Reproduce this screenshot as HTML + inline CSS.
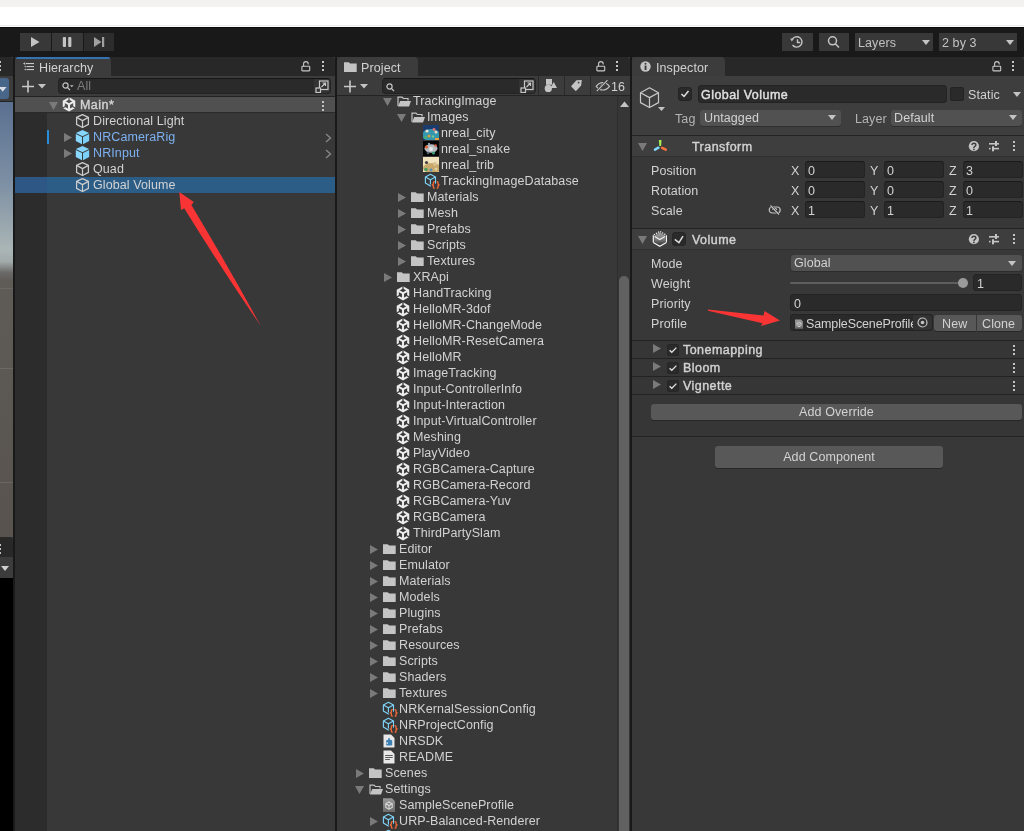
<!DOCTYPE html><html><head><meta charset="utf-8"><style>
*{margin:0;padding:0;box-sizing:border-box}
html,body{width:1024px;height:831px;overflow:hidden}
body{position:relative;background:#383838;font-family:"Liberation Sans", sans-serif;font-size:12.5px;color:#d2d2d2}
.a{position:absolute}
.t{position:absolute;white-space:nowrap;line-height:16px;letter-spacing:0.1px;will-change:transform}
.b{font-weight:bold}
</style></head><body>
<div class="a" style="left:0px;top:0px;width:1024px;height:7px;background:#f3f2f1;"></div>
<div class="a" style="left:0px;top:7px;width:1024px;height:18px;background:#ffffff;"></div>
<div class="a" style="left:0px;top:25px;width:1024px;height:1px;background:#ececec;"></div>
<div class="a" style="left:0px;top:26px;width:1024px;height:1px;background:#fafafa;"></div>
<div class="a" style="left:0px;top:27px;width:1024px;height:1px;background:#0c0c0c;"></div>
<div class="a" style="left:0px;top:28px;width:1024px;height:29px;background:#191919;"></div>
<div class="a" style="left:20px;top:33px;width:31px;height:18px;background:#383838;"></div>
<div class="a" style="left:52px;top:33px;width:31px;height:18px;background:#383838;"></div>
<div class="a" style="left:84px;top:33px;width:30px;height:18px;background:#2d2d2d;"></div>
<svg class="a" style="left:20px;top:33px" width="31" height="18" viewBox="0 0 31 18"><path d="M11 4V14L19.5 9Z" fill="#c4c4c4"/></svg>
<svg class="a" style="left:52px;top:33px" width="31" height="18" viewBox="0 0 31 18"><rect x="10.8" y="4" width="3.2" height="10" rx="1" fill="#c4c4c4"/><rect x="16.2" y="4" width="3.2" height="10" rx="1" fill="#c4c4c4"/></svg>
<svg class="a" style="left:84px;top:33px" width="31" height="18" viewBox="0 0 31 18"><path d="M10 4V14L17.5 9Z" fill="#a0a0a0"/><rect x="18" y="4" width="2.2" height="10" fill="#a0a0a0"/></svg>
<div class="a" style="left:782px;top:33px;width:31px;height:18px;background:#383838;"></div>
<svg class="a" style="left:782px;top:33px" width="31" height="18" viewBox="0 0 31 18"><g fill="none" stroke="#c4c4c4" stroke-width="1.4"><path d="M10.2 6.5A5.2 5.2 0 1 1 10.6 12"/><path d="M15.5 6.2V9.5H18.2"/></g><path d="M8.2 5.5L11.8 5.8L9.8 8.6Z" fill="#c4c4c4"/></svg>
<div class="a" style="left:819px;top:33px;width:30px;height:18px;background:#383838;"></div>
<svg class="a" style="left:819px;top:33px" width="30" height="18" viewBox="0 0 30 18"><g fill="none" stroke="#c4c4c4" stroke-width="1.5"><circle cx="13.5" cy="7.8" r="4"/><path d="M16.3 10.8L20 14.5"/></g></svg>
<div class="a" style="left:855px;top:33px;width:78px;height:18px;background:#383838;"></div>
<div class="t" style="left:858px;top:35px;color:#c2c2c2;">Layers</div>
<svg class="a" style="left:922px;top:40px" width="8" height="6" viewBox="0 0 8 6"><path d="M0 0H8L4 5Z" fill="#c4c4c4"/></svg>
<div class="a" style="left:939px;top:33px;width:78px;height:18px;background:#383838;"></div>
<div class="t" style="left:942px;top:35px;color:#c2c2c2;">2 by 3</div>
<svg class="a" style="left:1006px;top:40px" width="8" height="6" viewBox="0 0 8 6"><path d="M0 0H8L4 5Z" fill="#c4c4c4"/></svg>
<div class="a" style="left:0px;top:57px;width:13px;height:19px;background:#282828;border-radius:0 4px 0 0"></div>
<svg class="a" style="left:-2px;top:60px" width="3" height="11" viewBox="0 0 3 11"><g fill="#c4c4c4"><rect x="1" y="1" width="2" height="2"/><rect x="1" y="5" width="2" height="2"/><rect x="1" y="9" width="2" height="2"/></g></svg>
<div class="a" style="left:0px;top:76px;width:13px;height:26px;background:#3c3c3c;"></div>
<div class="a" style="left:0px;top:78px;width:9px;height:21px;background:#48658a;border-radius:0 3px 3px 0"></div>
<svg class="a" style="left:-1px;top:87px" width="8" height="6" viewBox="0 0 8 6"><path d="M0 0H7.5L3.75 4.8Z" fill="#d8dde4"/></svg>
<div class="a" style="left:0px;top:101px;width:13px;height:1px;background:#222;"></div>
<div class="a" style="left:0px;top:102px;width:13px;height:435px;background:linear-gradient(#5a7090 0%,#7b8ea3 18%,#aab5b5 34%,#a2aaaa 36.7%,#6b6a69 39.2%,#5f5b57 41%,#58534e 100%);"></div>
<div class="a" style="left:0px;top:288px;width:13px;height:1px;background:rgba(255,255,255,0.08);"></div>
<div class="a" style="left:0px;top:368px;width:13px;height:1px;background:rgba(255,255,255,0.1);"></div>
<div class="a" style="left:0px;top:482px;width:13px;height:1px;background:rgba(255,255,255,0.1);"></div>
<div class="a" style="left:0px;top:537px;width:13px;height:20px;background:#282828;border-radius:0 4px 0 0"></div>
<svg class="a" style="left:-2px;top:543px" width="3" height="11" viewBox="0 0 3 11"><g fill="#c4c4c4"><rect x="1" y="1" width="2" height="2"/><rect x="1" y="5" width="2" height="2"/><rect x="1" y="9" width="2" height="2"/></g></svg>
<div class="a" style="left:0px;top:557px;width:13px;height:21px;background:#3c3c3c;"></div>
<svg class="a" style="left:1px;top:566px" width="8" height="6" viewBox="0 0 8 6"><path d="M0 0H8L4 5Z" fill="#d0d0d0"/></svg>
<div class="a" style="left:0px;top:578px;width:13px;height:253px;background:#000000;"></div>
<div class="a" style="left:13px;top:57px;width:2px;height:774px;background:#191919;"></div>
<div class="a" style="left:15px;top:57px;width:320px;height:19px;background:#282828;border-radius:4px 4px 0 0"></div>
<div class="a" style="left:15px;top:57px;width:96px;height:19px;background:#3c3c3c;border-radius:4px 4px 0 0"></div>
<div class="a" style="left:16px;top:57px;width:94px;height:2px;background:#3472b2;border-radius:2px 2px 0 0"></div>
<svg class="a" style="left:23px;top:62px" width="12" height="10" viewBox="0 0 12 10"><g fill="#c8c8c8"><rect x="3" y="1" width="8" height="1.1"/><rect x="3.5" y="4" width="7.5" height="1.1"/><rect x="3.5" y="7" width="7.5" height="1.1"/><path d="M0 1.55L2.2 0.2V2.9Z"/><path d="M1.2 4.55L2.8 3.5V5.6Z"/><path d="M1.2 7.55L2.8 6.5V8.6Z"/></g></svg>
<div class="t" style="left:39px;top:60px;color:#d2d2d2;">Hierarchy</div>
<svg class="a" style="left:301px;top:61px" width="10" height="11" viewBox="0 0 10 11"><g fill="none" stroke="#c8c8c8" stroke-width="1.1"><rect x="0.9" y="5.3" width="7.8" height="4.6" rx="0.6"/><path d="M2.6 5.3V2.9A2.3 2.3 0 0 1 7.2 2.9V3.4"/></g></svg>
<svg class="a" style="left:321px;top:60px" width="3" height="11" viewBox="0 0 3 11"><g fill="#c4c4c4"><rect x="1" y="1" width="2" height="2"/><rect x="1" y="5" width="2" height="2"/><rect x="1" y="9" width="2" height="2"/></g></svg>
<div class="a" style="left:15px;top:76px;width:320px;height:20px;background:#3c3c3c;"></div>
<svg class="a" style="left:22px;top:80px" width="26" height="13" viewBox="0 0 26 13"><path d="M6 0.5V12.5M0 6.5H12" stroke="#c8c8c8" stroke-width="1.6"/><path d="M16 4H24L20 8.5Z" fill="#c4c4c4"/></svg>
<div class="a" style="left:58px;top:78px;width:273px;height:16px;background:#2a2a2a;border-radius:4px;border:1px solid #232323;border-top-color:#161616"></div>
<div class="a" style="left:314px;top:79px;width:16px;height:14px;background:#333333;border-radius:0 3px 3px 0"></div>
<svg class="a" style="left:62px;top:82px" width="12" height="9" viewBox="0 0 12 9"><g fill="none" stroke="#c4c4c4" stroke-width="1.2"><circle cx="3.5" cy="3.5" r="2.6"/><path d="M5.3 5.3L8 8"/></g><path d="M8 3.2H11.5L9.75 5.2Z" fill="#c4c4c4"/></svg>
<div class="t" style="left:77px;top:78px;color:#7d7d7d;">All</div>
<svg class="a" style="left:315px;top:80px" width="14" height="13" viewBox="0 0 14 13"><g fill="none" stroke="#c8c8c8" stroke-width="1.2"><rect x="4.5" y="1" width="8.5" height="8.5"/><rect x="1" y="8" width="4.5" height="4.5" fill="#333"/><path d="M6.5 7L10.5 3M7.5 3H10.5V6"/></g></svg>
<div class="a" style="left:15px;top:96px;width:320px;height:1px;background:#232323;"></div>
<div class="a" style="left:15px;top:97px;width:320px;height:15px;background:#505050;"></div>
<div class="a" style="left:15px;top:112px;width:320px;height:1px;background:#2a2a2a;"></div>
<div class="a" style="left:15px;top:113px;width:32px;height:718px;background:#2c2c2c;"></div>
<svg class="a" style="left:49px;top:102px" width="9" height="8" viewBox="0 0 9 8"><path d="M0 0H9L4.5 8Z" fill="#7a7a7a"/></svg>
<svg class="a" style="left:62px;top:97px" width="14" height="15" viewBox="0 0 14 15"><g fill="none" stroke="#ececec" stroke-width="2.1" stroke-linejoin="miter"><path d="M7 1.4L12.2 4.4V10.4L7 13.3L1.8 10.4V4.4Z"/><path d="M1.8 4.4L7 7.4L12.2 4.4M7 7.4V13.3"/></g><g stroke="#505050" stroke-width="1.2"><path d="M7 -1V3.4"/><path d="M0 11.5L3.4 9.5"/><path d="M14 11.5L10.6 9.5"/></g></svg>
<div class="t" style="left:80px;top:97px;color:#d2d2d2;-webkit-text-stroke:0.4px currentColor;letter-spacing:0.45px">Main*</div>
<svg class="a" style="left:321px;top:100px" width="3" height="11" viewBox="0 0 3 11"><g fill="#c4c4c4"><rect x="1" y="1" width="2" height="2"/><rect x="1" y="5" width="2" height="2"/><rect x="1" y="9" width="2" height="2"/></g></svg>
<div class="a" style="left:15px;top:177px;width:32px;height:16px;background:#2f5785;"></div>
<div class="a" style="left:47px;top:177px;width:288px;height:16px;background:#2c5d87;"></div>
<svg class="a" style="left:75px;top:114px" width="15" height="15" viewBox="0 0 15 15"><g fill="none" stroke="#cdcdcd" stroke-width="1.25" stroke-linejoin="round"><path d="M7.5 0.6L13.4 3.4V10.4L7.5 13.5L1.6 10.4V3.4Z"/><path d="M1.6 3.4L7.5 6.6L13.4 3.4M7.5 6.6V13.5"/></g></svg>
<div class="t" style="left:93px;top:113px;color:#d2d2d2;">Directional Light</div>
<svg class="a" style="left:64px;top:133px" width="8" height="9" viewBox="0 0 8 9"><path d="M0 0L8 4.5L0 9Z" fill="#7a7a7a"/></svg>
<svg class="a" style="left:325px;top:133px" width="7" height="10" viewBox="0 0 7 10"><path d="M1 1L5.5 5L1 9" fill="none" stroke="#8a8a8a" stroke-width="1.3"/></svg>
<svg class="a" style="left:75px;top:130px" width="15" height="15" viewBox="0 0 15 15"><path d="M7.5 0L14.2 3.1L7.5 6.3L0.8 3.1Z" fill="#84d4fb"/><path d="M0.8 4L7 7.1V14.2L0.8 11.1Z" fill="#88d8ff"/><path d="M14.2 4L8 7.1V14.2L14.2 11.1Z" fill="#7ccff7"/></svg>
<div class="t" style="left:93px;top:129px;color:#7cb0f0;">NRCameraRig</div>
<svg class="a" style="left:64px;top:149px" width="8" height="9" viewBox="0 0 8 9"><path d="M0 0L8 4.5L0 9Z" fill="#7a7a7a"/></svg>
<svg class="a" style="left:325px;top:149px" width="7" height="10" viewBox="0 0 7 10"><path d="M1 1L5.5 5L1 9" fill="none" stroke="#8a8a8a" stroke-width="1.3"/></svg>
<svg class="a" style="left:75px;top:146px" width="15" height="15" viewBox="0 0 15 15"><path d="M7.5 0L14.2 3.1L7.5 6.3L0.8 3.1Z" fill="#84d4fb"/><path d="M0.8 4L7 7.1V14.2L0.8 11.1Z" fill="#88d8ff"/><path d="M14.2 4L8 7.1V14.2L14.2 11.1Z" fill="#7ccff7"/></svg>
<div class="t" style="left:93px;top:145px;color:#7cb0f0;">NRInput</div>
<svg class="a" style="left:75px;top:162px" width="15" height="15" viewBox="0 0 15 15"><g fill="none" stroke="#cdcdcd" stroke-width="1.25" stroke-linejoin="round"><path d="M7.5 0.6L13.4 3.4V10.4L7.5 13.5L1.6 10.4V3.4Z"/><path d="M1.6 3.4L7.5 6.6L13.4 3.4M7.5 6.6V13.5"/></g></svg>
<div class="t" style="left:93px;top:161px;color:#d2d2d2;">Quad</div>
<svg class="a" style="left:75px;top:178px" width="15" height="15" viewBox="0 0 15 15"><g fill="none" stroke="#cdcdcd" stroke-width="1.25" stroke-linejoin="round"><path d="M7.5 0.6L13.4 3.4V10.4L7.5 13.5L1.6 10.4V3.4Z"/><path d="M1.6 3.4L7.5 6.6L13.4 3.4M7.5 6.6V13.5"/></g></svg>
<div class="t" style="left:93px;top:177px;color:#d2d2d2;">Global Volume</div>
<div class="a" style="left:47px;top:130px;width:2px;height:14px;background:#2a8bd6;"></div>
<div class="a" style="left:335px;top:57px;width:2px;height:774px;background:#191919;"></div>
<div class="a" style="left:337px;top:57px;width:293px;height:19px;background:#282828;border-radius:4px 4px 0 0"></div>
<div class="a" style="left:337px;top:57px;width:81px;height:19px;background:#3c3c3c;border-radius:4px 4px 0 0"></div>
<svg class="a" style="left:344px;top:62px" width="13" height="11" viewBox="0 0 13 11"><path d="M0 0.2H4.7L6.1 1.6H12.7V10H0Z" fill="#c4c4c4"/></svg>
<div class="t" style="left:361px;top:60px;color:#d2d2d2;">Project</div>
<svg class="a" style="left:596px;top:61px" width="10" height="11" viewBox="0 0 10 11"><g fill="none" stroke="#c8c8c8" stroke-width="1.1"><rect x="0.9" y="5.3" width="7.8" height="4.6" rx="0.6"/><path d="M2.6 5.3V2.9A2.3 2.3 0 0 1 7.2 2.9V3.4"/></g></svg>
<svg class="a" style="left:615px;top:60px" width="3" height="11" viewBox="0 0 3 11"><g fill="#c4c4c4"><rect x="1" y="1" width="2" height="2"/><rect x="1" y="5" width="2" height="2"/><rect x="1" y="9" width="2" height="2"/></g></svg>
<div class="a" style="left:337px;top:76px;width:293px;height:20px;background:#3c3c3c;"></div>
<svg class="a" style="left:344px;top:80px" width="26" height="13" viewBox="0 0 26 13"><path d="M6 0.5V12.5M0 6.5H12" stroke="#c8c8c8" stroke-width="1.6"/><path d="M16 4H24L20 8.5Z" fill="#c4c4c4"/></svg>
<div class="a" style="left:382px;top:78px;width:154px;height:16px;background:#2a2a2a;border-radius:4px;border:1px solid #232323;border-top-color:#161616"></div>
<div class="a" style="left:519px;top:79px;width:16px;height:14px;background:#333333;border-radius:0 3px 3px 0"></div>
<svg class="a" style="left:386px;top:83px" width="9" height="9" viewBox="0 0 9 9"><g fill="none" stroke="#c4c4c4" stroke-width="1.2"><circle cx="3.5" cy="3.5" r="2.6"/><path d="M5.3 5.3L8 8"/></g></svg>
<svg class="a" style="left:520px;top:80px" width="14" height="13" viewBox="0 0 14 13"><g fill="none" stroke="#c8c8c8" stroke-width="1.2"><rect x="4.5" y="1" width="8.5" height="8.5"/><rect x="1" y="8" width="4.5" height="4.5" fill="#333"/><path d="M6.5 7L10.5 3M7.5 3H10.5V6"/></g></svg>
<div class="a" style="left:538px;top:76px;width:1px;height:20px;background:#2a2a2a;"></div>
<div class="a" style="left:564px;top:76px;width:1px;height:20px;background:#2a2a2a;"></div>
<div class="a" style="left:590px;top:76px;width:1px;height:20px;background:#2a2a2a;"></div>
<svg class="a" style="left:544px;top:78px" width="15" height="15" viewBox="0 0 15 15"><rect x="2" y="1" width="6" height="5.8" fill="#c4c4c4"/><path d="M9.7 3.9L13 9.9H6.4Z" fill="#c4c4c4"/><circle cx="4.3" cy="10.4" r="3.6" fill="#c4c4c4"/></svg>
<svg class="a" style="left:570px;top:79px" width="13" height="13" viewBox="0 0 13 13"><path d="M6.5 1.3L11.8 0.9L11.2 6.6L5.8 12.2L1 7.2Z" fill="#c4c4c4"/><circle cx="8.6" cy="3.6" r="0.9" fill="#3c3c3c"/></svg>
<svg class="a" style="left:595px;top:79px" width="16" height="14" viewBox="0 0 16 14"><g fill="none" stroke="#c4c4c4" stroke-width="1.1"><path d="M1.2 7.3C3 5 5.2 3.6 7.8 3.6S12.7 5 14.5 7.3C12.7 9.6 10.5 11 7.8 11S3 9.6 1.2 7.3Z"/><path d="M6.5 9A2.2 2.2 0 0 1 9.8 5.8"/></g><path d="M1.8 12.2L12.5 1.2" stroke="#3c3c3c" stroke-width="2.6"/><path d="M1.8 12.2L12.5 1.2" stroke="#c4c4c4" stroke-width="1.1"/></svg>
<div class="t" style="left:611px;top:79px;color:#d2d2d2;">16</div>
<div class="a" style="left:337px;top:95px;width:293px;height:1px;background:#232323;"></div>
<div class="a" style="left:337px;top:96px;width:280px;height:735px;overflow:hidden">
<svg class="a" style="left:46px;top:2px" width="9" height="8" viewBox="0 0 9 8"><path d="M0 0H9L4.5 8Z" fill="#7a7a7a"/></svg>
<svg class="a" style="left:60px;top:0px" width="14" height="11" viewBox="0 0 14 11"><path d="M1 10V1.2H5L6.3 2.5H11V4.5" fill="none" stroke="#c4c4c4" stroke-width="1.2"/><path d="M1 10.5L3.2 5H14L12 10.5Z" fill="#c4c4c4"/></svg>
<div class="t" style="left:76px;top:-3px;color:#d2d2d2;">TrackingImage</div>
<svg class="a" style="left:60px;top:18px" width="9" height="8" viewBox="0 0 9 8"><path d="M0 0H9L4.5 8Z" fill="#7a7a7a"/></svg>
<svg class="a" style="left:74px;top:16px" width="14" height="11" viewBox="0 0 14 11"><path d="M1 10V1.2H5L6.3 2.5H11V4.5" fill="none" stroke="#c4c4c4" stroke-width="1.2"/><path d="M1 10.5L3.2 5H14L12 10.5Z" fill="#c4c4c4"/></svg>
<div class="t" style="left:90px;top:13px;color:#d2d2d2;">Images</div>
<svg class="a" style="left:86px;top:29px" width="16" height="15" viewBox="0 0 16 15"><rect width="16" height="15" fill="#1d3c6e"/><ellipse cx="8" cy="10" rx="9" ry="6" fill="#3596b0"/><circle cx="4" cy="6" r="1.6" fill="#e8e0d0"/><circle cx="11" cy="4.5" r="1.4" fill="#e07070"/><circle cx="13" cy="7" r="1.5" fill="#f0d8c0"/><circle cx="6" cy="11" r="1.6" fill="#d0a040"/><circle cx="2.5" cy="12.5" r="1.4" fill="#50b070"/><rect x="12" y="13" width="4" height="2" fill="#e8a040"/><circle cx="10" cy="11.5" r="1.2" fill="#80c890"/></svg>
<div class="t" style="left:104px;top:29px;color:#d2d2d2;">nreal_city</div>
<svg class="a" style="left:86px;top:45px" width="16" height="15" viewBox="0 0 16 15"><rect width="16" height="15" fill="#050505"/><ellipse cx="8" cy="7.5" rx="6.5" ry="4.2" fill="#b8bcc0"/><circle cx="3.5" cy="6" r="1.5" fill="#e06030"/><circle cx="12.5" cy="4.5" r="1.3" fill="#d86040"/><circle cx="6" cy="3" r="1.2" fill="#8aa0b0"/><circle cx="10.5" cy="12" r="1.5" fill="#40a080"/><circle cx="5" cy="12" r="1.3" fill="#506070"/><circle cx="8" cy="8" r="2" fill="#e8e8e8"/></svg>
<div class="t" style="left:104px;top:45px;color:#d2d2d2;">nreal_snake</div>
<svg class="a" style="left:86px;top:61px" width="16" height="15" viewBox="0 0 16 15"><rect width="16" height="15" fill="#f1e3bd"/><ellipse cx="9" cy="11" rx="9" ry="5" fill="#c9a86c"/><circle cx="3.5" cy="5.5" r="1.6" fill="#404040"/><circle cx="3" cy="12.5" r="1.8" fill="#4aa060"/><circle cx="8" cy="13" r="1.4" fill="#5890c0"/><circle cx="12" cy="7" r="2" fill="#d8c090"/><circle cx="13" cy="12" r="1.5" fill="#e0d0a0"/></svg>
<div class="t" style="left:104px;top:61px;color:#d2d2d2;">nreal_trib</div>
<svg class="a" style="left:87px;top:77px" width="17" height="16" viewBox="0 0 17 16"><g fill="none" stroke="#7dd3f7" stroke-width="1.15" stroke-linejoin="round"><path d="M6.4 1.3L11.5 4V10L6.4 13L1.4 10V4Z"/><path d="M1.4 4L6.4 6.8L11.5 4M6.4 6.8V13"/></g><path d="M10.8 8.6H10.3Q9.4 8.6 9.4 9.5V11L8.4 11.9L9.4 12.8V14.2Q9.4 15.1 10.3 15.1H10.8M12.6 8.6H13.1Q14 8.6 14 9.5V11L15 11.9L14 12.8V14.2Q14 15.1 13.1 15.1H12.6" fill="none" stroke="#383838" stroke-width="3.2"/><path d="M10.8 8.6H10.3Q9.4 8.6 9.4 9.5V11L8.4 11.9L9.4 12.8V14.2Q9.4 15.1 10.3 15.1H10.8M12.6 8.6H13.1Q14 8.6 14 9.5V11L15 11.9L14 12.8V14.2Q14 15.1 13.1 15.1H12.6" fill="none" stroke="#f26b38" stroke-width="1.3"/></svg>
<div class="t" style="left:104px;top:77px;color:#d2d2d2;">TrackingImageDatabase</div>
<svg class="a" style="left:61px;top:97px" width="8" height="9" viewBox="0 0 8 9"><path d="M0 0L8 4.5L0 9Z" fill="#7a7a7a"/></svg>
<svg class="a" style="left:74px;top:96px" width="13" height="11" viewBox="0 0 13 11"><path d="M0 0.2H4.7L6.1 1.6H12.7V10H0Z" fill="#c4c4c4"/></svg>
<div class="t" style="left:90px;top:93px;color:#d2d2d2;">Materials</div>
<svg class="a" style="left:61px;top:113px" width="8" height="9" viewBox="0 0 8 9"><path d="M0 0L8 4.5L0 9Z" fill="#7a7a7a"/></svg>
<svg class="a" style="left:74px;top:112px" width="13" height="11" viewBox="0 0 13 11"><path d="M0 0.2H4.7L6.1 1.6H12.7V10H0Z" fill="#c4c4c4"/></svg>
<div class="t" style="left:90px;top:109px;color:#d2d2d2;">Mesh</div>
<svg class="a" style="left:61px;top:129px" width="8" height="9" viewBox="0 0 8 9"><path d="M0 0L8 4.5L0 9Z" fill="#7a7a7a"/></svg>
<svg class="a" style="left:74px;top:128px" width="13" height="11" viewBox="0 0 13 11"><path d="M0 0.2H4.7L6.1 1.6H12.7V10H0Z" fill="#c4c4c4"/></svg>
<div class="t" style="left:90px;top:125px;color:#d2d2d2;">Prefabs</div>
<svg class="a" style="left:61px;top:145px" width="8" height="9" viewBox="0 0 8 9"><path d="M0 0L8 4.5L0 9Z" fill="#7a7a7a"/></svg>
<svg class="a" style="left:74px;top:144px" width="13" height="11" viewBox="0 0 13 11"><path d="M0 0.2H4.7L6.1 1.6H12.7V10H0Z" fill="#c4c4c4"/></svg>
<div class="t" style="left:90px;top:141px;color:#d2d2d2;">Scripts</div>
<svg class="a" style="left:61px;top:161px" width="8" height="9" viewBox="0 0 8 9"><path d="M0 0L8 4.5L0 9Z" fill="#7a7a7a"/></svg>
<svg class="a" style="left:74px;top:160px" width="13" height="11" viewBox="0 0 13 11"><path d="M0 0.2H4.7L6.1 1.6H12.7V10H0Z" fill="#c4c4c4"/></svg>
<div class="t" style="left:90px;top:157px;color:#d2d2d2;">Textures</div>
<svg class="a" style="left:47px;top:177px" width="8" height="9" viewBox="0 0 8 9"><path d="M0 0L8 4.5L0 9Z" fill="#7a7a7a"/></svg>
<svg class="a" style="left:60px;top:176px" width="13" height="11" viewBox="0 0 13 11"><path d="M0 0.2H4.7L6.1 1.6H12.7V10H0Z" fill="#c4c4c4"/></svg>
<div class="t" style="left:76px;top:173px;color:#d2d2d2;">XRApi</div>
<svg class="a" style="left:59px;top:190px" width="14" height="15" viewBox="0 0 14 15"><g fill="none" stroke="#ececec" stroke-width="2.1" stroke-linejoin="miter"><path d="M7 1.4L12.2 4.4V10.4L7 13.3L1.8 10.4V4.4Z"/><path d="M1.8 4.4L7 7.4L12.2 4.4M7 7.4V13.3"/></g><g stroke="#383838" stroke-width="1.2"><path d="M7 -1V3.4"/><path d="M0 11.5L3.4 9.5"/><path d="M14 11.5L10.6 9.5"/></g></svg>
<div class="t" style="left:76px;top:189px;color:#d2d2d2;">HandTracking</div>
<svg class="a" style="left:59px;top:206px" width="14" height="15" viewBox="0 0 14 15"><g fill="none" stroke="#ececec" stroke-width="2.1" stroke-linejoin="miter"><path d="M7 1.4L12.2 4.4V10.4L7 13.3L1.8 10.4V4.4Z"/><path d="M1.8 4.4L7 7.4L12.2 4.4M7 7.4V13.3"/></g><g stroke="#383838" stroke-width="1.2"><path d="M7 -1V3.4"/><path d="M0 11.5L3.4 9.5"/><path d="M14 11.5L10.6 9.5"/></g></svg>
<div class="t" style="left:76px;top:205px;color:#d2d2d2;">HelloMR-3dof</div>
<svg class="a" style="left:59px;top:222px" width="14" height="15" viewBox="0 0 14 15"><g fill="none" stroke="#ececec" stroke-width="2.1" stroke-linejoin="miter"><path d="M7 1.4L12.2 4.4V10.4L7 13.3L1.8 10.4V4.4Z"/><path d="M1.8 4.4L7 7.4L12.2 4.4M7 7.4V13.3"/></g><g stroke="#383838" stroke-width="1.2"><path d="M7 -1V3.4"/><path d="M0 11.5L3.4 9.5"/><path d="M14 11.5L10.6 9.5"/></g></svg>
<div class="t" style="left:76px;top:221px;color:#d2d2d2;">HelloMR-ChangeMode</div>
<svg class="a" style="left:59px;top:238px" width="14" height="15" viewBox="0 0 14 15"><g fill="none" stroke="#ececec" stroke-width="2.1" stroke-linejoin="miter"><path d="M7 1.4L12.2 4.4V10.4L7 13.3L1.8 10.4V4.4Z"/><path d="M1.8 4.4L7 7.4L12.2 4.4M7 7.4V13.3"/></g><g stroke="#383838" stroke-width="1.2"><path d="M7 -1V3.4"/><path d="M0 11.5L3.4 9.5"/><path d="M14 11.5L10.6 9.5"/></g></svg>
<div class="t" style="left:76px;top:237px;color:#d2d2d2;">HelloMR-ResetCamera</div>
<svg class="a" style="left:59px;top:254px" width="14" height="15" viewBox="0 0 14 15"><g fill="none" stroke="#ececec" stroke-width="2.1" stroke-linejoin="miter"><path d="M7 1.4L12.2 4.4V10.4L7 13.3L1.8 10.4V4.4Z"/><path d="M1.8 4.4L7 7.4L12.2 4.4M7 7.4V13.3"/></g><g stroke="#383838" stroke-width="1.2"><path d="M7 -1V3.4"/><path d="M0 11.5L3.4 9.5"/><path d="M14 11.5L10.6 9.5"/></g></svg>
<div class="t" style="left:76px;top:253px;color:#d2d2d2;">HelloMR</div>
<svg class="a" style="left:59px;top:270px" width="14" height="15" viewBox="0 0 14 15"><g fill="none" stroke="#ececec" stroke-width="2.1" stroke-linejoin="miter"><path d="M7 1.4L12.2 4.4V10.4L7 13.3L1.8 10.4V4.4Z"/><path d="M1.8 4.4L7 7.4L12.2 4.4M7 7.4V13.3"/></g><g stroke="#383838" stroke-width="1.2"><path d="M7 -1V3.4"/><path d="M0 11.5L3.4 9.5"/><path d="M14 11.5L10.6 9.5"/></g></svg>
<div class="t" style="left:76px;top:269px;color:#d2d2d2;">ImageTracking</div>
<svg class="a" style="left:59px;top:286px" width="14" height="15" viewBox="0 0 14 15"><g fill="none" stroke="#ececec" stroke-width="2.1" stroke-linejoin="miter"><path d="M7 1.4L12.2 4.4V10.4L7 13.3L1.8 10.4V4.4Z"/><path d="M1.8 4.4L7 7.4L12.2 4.4M7 7.4V13.3"/></g><g stroke="#383838" stroke-width="1.2"><path d="M7 -1V3.4"/><path d="M0 11.5L3.4 9.5"/><path d="M14 11.5L10.6 9.5"/></g></svg>
<div class="t" style="left:76px;top:285px;color:#d2d2d2;">Input-ControllerInfo</div>
<svg class="a" style="left:59px;top:302px" width="14" height="15" viewBox="0 0 14 15"><g fill="none" stroke="#ececec" stroke-width="2.1" stroke-linejoin="miter"><path d="M7 1.4L12.2 4.4V10.4L7 13.3L1.8 10.4V4.4Z"/><path d="M1.8 4.4L7 7.4L12.2 4.4M7 7.4V13.3"/></g><g stroke="#383838" stroke-width="1.2"><path d="M7 -1V3.4"/><path d="M0 11.5L3.4 9.5"/><path d="M14 11.5L10.6 9.5"/></g></svg>
<div class="t" style="left:76px;top:301px;color:#d2d2d2;">Input-Interaction</div>
<svg class="a" style="left:59px;top:318px" width="14" height="15" viewBox="0 0 14 15"><g fill="none" stroke="#ececec" stroke-width="2.1" stroke-linejoin="miter"><path d="M7 1.4L12.2 4.4V10.4L7 13.3L1.8 10.4V4.4Z"/><path d="M1.8 4.4L7 7.4L12.2 4.4M7 7.4V13.3"/></g><g stroke="#383838" stroke-width="1.2"><path d="M7 -1V3.4"/><path d="M0 11.5L3.4 9.5"/><path d="M14 11.5L10.6 9.5"/></g></svg>
<div class="t" style="left:76px;top:317px;color:#d2d2d2;">Input-VirtualController</div>
<svg class="a" style="left:59px;top:334px" width="14" height="15" viewBox="0 0 14 15"><g fill="none" stroke="#ececec" stroke-width="2.1" stroke-linejoin="miter"><path d="M7 1.4L12.2 4.4V10.4L7 13.3L1.8 10.4V4.4Z"/><path d="M1.8 4.4L7 7.4L12.2 4.4M7 7.4V13.3"/></g><g stroke="#383838" stroke-width="1.2"><path d="M7 -1V3.4"/><path d="M0 11.5L3.4 9.5"/><path d="M14 11.5L10.6 9.5"/></g></svg>
<div class="t" style="left:76px;top:333px;color:#d2d2d2;">Meshing</div>
<svg class="a" style="left:59px;top:350px" width="14" height="15" viewBox="0 0 14 15"><g fill="none" stroke="#ececec" stroke-width="2.1" stroke-linejoin="miter"><path d="M7 1.4L12.2 4.4V10.4L7 13.3L1.8 10.4V4.4Z"/><path d="M1.8 4.4L7 7.4L12.2 4.4M7 7.4V13.3"/></g><g stroke="#383838" stroke-width="1.2"><path d="M7 -1V3.4"/><path d="M0 11.5L3.4 9.5"/><path d="M14 11.5L10.6 9.5"/></g></svg>
<div class="t" style="left:76px;top:349px;color:#d2d2d2;">PlayVideo</div>
<svg class="a" style="left:59px;top:366px" width="14" height="15" viewBox="0 0 14 15"><g fill="none" stroke="#ececec" stroke-width="2.1" stroke-linejoin="miter"><path d="M7 1.4L12.2 4.4V10.4L7 13.3L1.8 10.4V4.4Z"/><path d="M1.8 4.4L7 7.4L12.2 4.4M7 7.4V13.3"/></g><g stroke="#383838" stroke-width="1.2"><path d="M7 -1V3.4"/><path d="M0 11.5L3.4 9.5"/><path d="M14 11.5L10.6 9.5"/></g></svg>
<div class="t" style="left:76px;top:365px;color:#d2d2d2;">RGBCamera-Capture</div>
<svg class="a" style="left:59px;top:382px" width="14" height="15" viewBox="0 0 14 15"><g fill="none" stroke="#ececec" stroke-width="2.1" stroke-linejoin="miter"><path d="M7 1.4L12.2 4.4V10.4L7 13.3L1.8 10.4V4.4Z"/><path d="M1.8 4.4L7 7.4L12.2 4.4M7 7.4V13.3"/></g><g stroke="#383838" stroke-width="1.2"><path d="M7 -1V3.4"/><path d="M0 11.5L3.4 9.5"/><path d="M14 11.5L10.6 9.5"/></g></svg>
<div class="t" style="left:76px;top:381px;color:#d2d2d2;">RGBCamera-Record</div>
<svg class="a" style="left:59px;top:398px" width="14" height="15" viewBox="0 0 14 15"><g fill="none" stroke="#ececec" stroke-width="2.1" stroke-linejoin="miter"><path d="M7 1.4L12.2 4.4V10.4L7 13.3L1.8 10.4V4.4Z"/><path d="M1.8 4.4L7 7.4L12.2 4.4M7 7.4V13.3"/></g><g stroke="#383838" stroke-width="1.2"><path d="M7 -1V3.4"/><path d="M0 11.5L3.4 9.5"/><path d="M14 11.5L10.6 9.5"/></g></svg>
<div class="t" style="left:76px;top:397px;color:#d2d2d2;">RGBCamera-Yuv</div>
<svg class="a" style="left:59px;top:414px" width="14" height="15" viewBox="0 0 14 15"><g fill="none" stroke="#ececec" stroke-width="2.1" stroke-linejoin="miter"><path d="M7 1.4L12.2 4.4V10.4L7 13.3L1.8 10.4V4.4Z"/><path d="M1.8 4.4L7 7.4L12.2 4.4M7 7.4V13.3"/></g><g stroke="#383838" stroke-width="1.2"><path d="M7 -1V3.4"/><path d="M0 11.5L3.4 9.5"/><path d="M14 11.5L10.6 9.5"/></g></svg>
<div class="t" style="left:76px;top:413px;color:#d2d2d2;">RGBCamera</div>
<svg class="a" style="left:59px;top:430px" width="14" height="15" viewBox="0 0 14 15"><g fill="none" stroke="#ececec" stroke-width="2.1" stroke-linejoin="miter"><path d="M7 1.4L12.2 4.4V10.4L7 13.3L1.8 10.4V4.4Z"/><path d="M1.8 4.4L7 7.4L12.2 4.4M7 7.4V13.3"/></g><g stroke="#383838" stroke-width="1.2"><path d="M7 -1V3.4"/><path d="M0 11.5L3.4 9.5"/><path d="M14 11.5L10.6 9.5"/></g></svg>
<div class="t" style="left:76px;top:429px;color:#d2d2d2;">ThirdPartySlam</div>
<svg class="a" style="left:33px;top:449px" width="8" height="9" viewBox="0 0 8 9"><path d="M0 0L8 4.5L0 9Z" fill="#7a7a7a"/></svg>
<svg class="a" style="left:46px;top:448px" width="13" height="11" viewBox="0 0 13 11"><path d="M0 0.2H4.7L6.1 1.6H12.7V10H0Z" fill="#c4c4c4"/></svg>
<div class="t" style="left:62px;top:445px;color:#d2d2d2;">Editor</div>
<svg class="a" style="left:33px;top:465px" width="8" height="9" viewBox="0 0 8 9"><path d="M0 0L8 4.5L0 9Z" fill="#7a7a7a"/></svg>
<svg class="a" style="left:46px;top:464px" width="13" height="11" viewBox="0 0 13 11"><path d="M0 0.2H4.7L6.1 1.6H12.7V10H0Z" fill="#c4c4c4"/></svg>
<div class="t" style="left:62px;top:461px;color:#d2d2d2;">Emulator</div>
<svg class="a" style="left:33px;top:481px" width="8" height="9" viewBox="0 0 8 9"><path d="M0 0L8 4.5L0 9Z" fill="#7a7a7a"/></svg>
<svg class="a" style="left:46px;top:480px" width="13" height="11" viewBox="0 0 13 11"><path d="M0 0.2H4.7L6.1 1.6H12.7V10H0Z" fill="#c4c4c4"/></svg>
<div class="t" style="left:62px;top:477px;color:#d2d2d2;">Materials</div>
<svg class="a" style="left:33px;top:497px" width="8" height="9" viewBox="0 0 8 9"><path d="M0 0L8 4.5L0 9Z" fill="#7a7a7a"/></svg>
<svg class="a" style="left:46px;top:496px" width="13" height="11" viewBox="0 0 13 11"><path d="M0 0.2H4.7L6.1 1.6H12.7V10H0Z" fill="#c4c4c4"/></svg>
<div class="t" style="left:62px;top:493px;color:#d2d2d2;">Models</div>
<svg class="a" style="left:33px;top:513px" width="8" height="9" viewBox="0 0 8 9"><path d="M0 0L8 4.5L0 9Z" fill="#7a7a7a"/></svg>
<svg class="a" style="left:46px;top:512px" width="13" height="11" viewBox="0 0 13 11"><path d="M0 0.2H4.7L6.1 1.6H12.7V10H0Z" fill="#c4c4c4"/></svg>
<div class="t" style="left:62px;top:509px;color:#d2d2d2;">Plugins</div>
<svg class="a" style="left:33px;top:529px" width="8" height="9" viewBox="0 0 8 9"><path d="M0 0L8 4.5L0 9Z" fill="#7a7a7a"/></svg>
<svg class="a" style="left:46px;top:528px" width="13" height="11" viewBox="0 0 13 11"><path d="M0 0.2H4.7L6.1 1.6H12.7V10H0Z" fill="#c4c4c4"/></svg>
<div class="t" style="left:62px;top:525px;color:#d2d2d2;">Prefabs</div>
<svg class="a" style="left:33px;top:545px" width="8" height="9" viewBox="0 0 8 9"><path d="M0 0L8 4.5L0 9Z" fill="#7a7a7a"/></svg>
<svg class="a" style="left:46px;top:544px" width="13" height="11" viewBox="0 0 13 11"><path d="M0 0.2H4.7L6.1 1.6H12.7V10H0Z" fill="#c4c4c4"/></svg>
<div class="t" style="left:62px;top:541px;color:#d2d2d2;">Resources</div>
<svg class="a" style="left:33px;top:561px" width="8" height="9" viewBox="0 0 8 9"><path d="M0 0L8 4.5L0 9Z" fill="#7a7a7a"/></svg>
<svg class="a" style="left:46px;top:560px" width="13" height="11" viewBox="0 0 13 11"><path d="M0 0.2H4.7L6.1 1.6H12.7V10H0Z" fill="#c4c4c4"/></svg>
<div class="t" style="left:62px;top:557px;color:#d2d2d2;">Scripts</div>
<svg class="a" style="left:33px;top:577px" width="8" height="9" viewBox="0 0 8 9"><path d="M0 0L8 4.5L0 9Z" fill="#7a7a7a"/></svg>
<svg class="a" style="left:46px;top:576px" width="13" height="11" viewBox="0 0 13 11"><path d="M0 0.2H4.7L6.1 1.6H12.7V10H0Z" fill="#c4c4c4"/></svg>
<div class="t" style="left:62px;top:573px;color:#d2d2d2;">Shaders</div>
<svg class="a" style="left:33px;top:593px" width="8" height="9" viewBox="0 0 8 9"><path d="M0 0L8 4.5L0 9Z" fill="#7a7a7a"/></svg>
<svg class="a" style="left:46px;top:592px" width="13" height="11" viewBox="0 0 13 11"><path d="M0 0.2H4.7L6.1 1.6H12.7V10H0Z" fill="#c4c4c4"/></svg>
<div class="t" style="left:62px;top:589px;color:#d2d2d2;">Textures</div>
<svg class="a" style="left:45px;top:605px" width="17" height="16" viewBox="0 0 17 16"><g fill="none" stroke="#7dd3f7" stroke-width="1.15" stroke-linejoin="round"><path d="M6.4 1.3L11.5 4V10L6.4 13L1.4 10V4Z"/><path d="M1.4 4L6.4 6.8L11.5 4M6.4 6.8V13"/></g><path d="M10.8 8.6H10.3Q9.4 8.6 9.4 9.5V11L8.4 11.9L9.4 12.8V14.2Q9.4 15.1 10.3 15.1H10.8M12.6 8.6H13.1Q14 8.6 14 9.5V11L15 11.9L14 12.8V14.2Q14 15.1 13.1 15.1H12.6" fill="none" stroke="#383838" stroke-width="3.2"/><path d="M10.8 8.6H10.3Q9.4 8.6 9.4 9.5V11L8.4 11.9L9.4 12.8V14.2Q9.4 15.1 10.3 15.1H10.8M12.6 8.6H13.1Q14 8.6 14 9.5V11L15 11.9L14 12.8V14.2Q14 15.1 13.1 15.1H12.6" fill="none" stroke="#f26b38" stroke-width="1.3"/></svg>
<div class="t" style="left:62px;top:605px;color:#d2d2d2;">NRKernalSessionConfig</div>
<svg class="a" style="left:45px;top:621px" width="17" height="16" viewBox="0 0 17 16"><g fill="none" stroke="#7dd3f7" stroke-width="1.15" stroke-linejoin="round"><path d="M6.4 1.3L11.5 4V10L6.4 13L1.4 10V4Z"/><path d="M1.4 4L6.4 6.8L11.5 4M6.4 6.8V13"/></g><path d="M10.8 8.6H10.3Q9.4 8.6 9.4 9.5V11L8.4 11.9L9.4 12.8V14.2Q9.4 15.1 10.3 15.1H10.8M12.6 8.6H13.1Q14 8.6 14 9.5V11L15 11.9L14 12.8V14.2Q14 15.1 13.1 15.1H12.6" fill="none" stroke="#383838" stroke-width="3.2"/><path d="M10.8 8.6H10.3Q9.4 8.6 9.4 9.5V11L8.4 11.9L9.4 12.8V14.2Q9.4 15.1 10.3 15.1H10.8M12.6 8.6H13.1Q14 8.6 14 9.5V11L15 11.9L14 12.8V14.2Q14 15.1 13.1 15.1H12.6" fill="none" stroke="#f26b38" stroke-width="1.3"/></svg>
<div class="t" style="left:62px;top:621px;color:#d2d2d2;">NRProjectConfig</div>
<svg class="a" style="left:46px;top:638px" width="12" height="14" viewBox="0 0 12 14"><path d="M0.5 0.5H8L11.5 4V13.5H0.5Z" fill="#e8e8e8"/><rect x="3.2" y="6" width="6" height="5.6" rx="0.8" fill="#3d80b3"/><rect x="5" y="4.3" width="2.2" height="1.6" rx="0.6" fill="#3d80b3"/><rect x="3.6" y="8.3" width="1.2" height="1.6" fill="#eee"/></svg>
<div class="t" style="left:62px;top:637px;color:#d2d2d2;">NRSDK</div>
<svg class="a" style="left:46px;top:654px" width="12" height="14" viewBox="0 0 12 14"><path d="M0.5 0.5H8L11.5 4V13.5H0.5Z" fill="#e8e8e8"/><g stroke="#5a5a5a" stroke-width="1"><path d="M2.2 5.5H9.7M2.2 7.5H9.7M2.2 9.5H6.9"/></g></svg>
<div class="t" style="left:62px;top:653px;color:#d2d2d2;">README</div>
<svg class="a" style="left:19px;top:673px" width="8" height="9" viewBox="0 0 8 9"><path d="M0 0L8 4.5L0 9Z" fill="#7a7a7a"/></svg>
<svg class="a" style="left:32px;top:672px" width="13" height="11" viewBox="0 0 13 11"><path d="M0 0.2H4.7L6.1 1.6H12.7V10H0Z" fill="#c4c4c4"/></svg>
<div class="t" style="left:48px;top:669px;color:#d2d2d2;">Scenes</div>
<svg class="a" style="left:18px;top:690px" width="9" height="8" viewBox="0 0 9 8"><path d="M0 0H9L4.5 8Z" fill="#7a7a7a"/></svg>
<svg class="a" style="left:32px;top:688px" width="14" height="11" viewBox="0 0 14 11"><path d="M1 10V1.2H5L6.3 2.5H11V4.5" fill="none" stroke="#c4c4c4" stroke-width="1.2"/><path d="M1 10.5L3.2 5H14L12 10.5Z" fill="#c4c4c4"/></svg>
<div class="t" style="left:48px;top:685px;color:#d2d2d2;">Settings</div>
<svg class="a" style="left:46px;top:702px" width="12" height="14" viewBox="0 0 12 14"><defs><linearGradient id="vpg" x1="0" y1="0" x2="0" y2="1"><stop offset="0" stop-color="#9a9a9a"/><stop offset="1" stop-color="#6a6a6a"/></linearGradient></defs><path d="M0 0.3H9L12 3.3V14H0Z" fill="url(#vpg)"/><g fill="none" stroke="#d8d8d8" stroke-width="1.1"><path d="M6 4L9.2 5.8V9.4L6 11.2L2.8 9.4V5.8Z"/><path d="M2.8 5.8L6 7.6L9.2 5.8M6 7.6V11.2"/></g></svg>
<div class="t" style="left:62px;top:701px;color:#d2d2d2;">SampleSceneProfile</div>
<svg class="a" style="left:33px;top:721px" width="8" height="9" viewBox="0 0 8 9"><path d="M0 0L8 4.5L0 9Z" fill="#7a7a7a"/></svg>
<svg class="a" style="left:45px;top:717px" width="17" height="16" viewBox="0 0 17 16"><g fill="none" stroke="#7dd3f7" stroke-width="1.15" stroke-linejoin="round"><path d="M6.4 1.3L11.5 4V10L6.4 13L1.4 10V4Z"/><path d="M1.4 4L6.4 6.8L11.5 4M6.4 6.8V13"/></g><path d="M10.8 8.6H10.3Q9.4 8.6 9.4 9.5V11L8.4 11.9L9.4 12.8V14.2Q9.4 15.1 10.3 15.1H10.8M12.6 8.6H13.1Q14 8.6 14 9.5V11L15 11.9L14 12.8V14.2Q14 15.1 13.1 15.1H12.6" fill="none" stroke="#383838" stroke-width="3.2"/><path d="M10.8 8.6H10.3Q9.4 8.6 9.4 9.5V11L8.4 11.9L9.4 12.8V14.2Q9.4 15.1 10.3 15.1H10.8M12.6 8.6H13.1Q14 8.6 14 9.5V11L15 11.9L14 12.8V14.2Q14 15.1 13.1 15.1H12.6" fill="none" stroke="#f26b38" stroke-width="1.3"/></svg>
<div class="t" style="left:62px;top:717px;color:#d2d2d2;">URP-Balanced-Renderer</div>
<svg class="a" style="left:33px;top:737px" width="8" height="9" viewBox="0 0 8 9"><path d="M0 0L8 4.5L0 9Z" fill="#7a7a7a"/></svg>
<svg class="a" style="left:45px;top:733px" width="17" height="16" viewBox="0 0 17 16"><g fill="none" stroke="#7dd3f7" stroke-width="1.15" stroke-linejoin="round"><path d="M6.4 1.3L11.5 4V10L6.4 13L1.4 10V4Z"/><path d="M1.4 4L6.4 6.8L11.5 4M6.4 6.8V13"/></g><path d="M10.8 8.6H10.3Q9.4 8.6 9.4 9.5V11L8.4 11.9L9.4 12.8V14.2Q9.4 15.1 10.3 15.1H10.8M12.6 8.6H13.1Q14 8.6 14 9.5V11L15 11.9L14 12.8V14.2Q14 15.1 13.1 15.1H12.6" fill="none" stroke="#383838" stroke-width="3.2"/><path d="M10.8 8.6H10.3Q9.4 8.6 9.4 9.5V11L8.4 11.9L9.4 12.8V14.2Q9.4 15.1 10.3 15.1H10.8M12.6 8.6H13.1Q14 8.6 14 9.5V11L15 11.9L14 12.8V14.2Q14 15.1 13.1 15.1H12.6" fill="none" stroke="#f26b38" stroke-width="1.3"/></svg>
<div class="t" style="left:62px;top:733px;color:#d2d2d2;">URP-HighFidelity</div>
</div>
<div class="a" style="left:617px;top:96px;width:13px;height:735px;background:#363636;"></div>
<div class="a" style="left:617px;top:96px;width:1px;height:735px;background:#2e2e2e;"></div>
<svg class="a" style="left:620px;top:101px" width="9" height="7" viewBox="0 0 9 7"><path d="M4.5 0.5L9 6H0Z" fill="#c4c4c4"/></svg>
<div class="a" style="left:619px;top:276px;width:10px;height:560px;background:#616161;border-radius:5px"></div>
<div class="a" style="left:630px;top:57px;width:2px;height:774px;background:#191919;"></div>
<div class="a" style="left:632px;top:57px;width:392px;height:19px;background:#282828;border-radius:4px 4px 0 0"></div>
<div class="a" style="left:632px;top:57px;width:93px;height:19px;background:#3c3c3c;border-radius:4px 4px 0 0"></div>
<svg class="a" style="left:640px;top:61px" width="11" height="11" viewBox="0 0 11 11"><circle cx="5.5" cy="5.5" r="5.2" fill="#c4c4c4"/><rect x="4.6" y="4.5" width="1.9" height="4.5" fill="#3c3c3c"/><circle cx="5.5" cy="2.8" r="1" fill="#3c3c3c"/></svg>
<div class="t" style="left:656px;top:60px;color:#d2d2d2;">Inspector</div>
<svg class="a" style="left:992px;top:61px" width="10" height="11" viewBox="0 0 10 11"><g fill="none" stroke="#c8c8c8" stroke-width="1.1"><rect x="0.9" y="5.3" width="7.8" height="4.6" rx="0.6"/><path d="M2.6 5.3V2.9A2.3 2.3 0 0 1 7.2 2.9V3.4"/></g></svg>
<svg class="a" style="left:1011px;top:60px" width="3" height="11" viewBox="0 0 3 11"><g fill="#c4c4c4"><rect x="1" y="1" width="2" height="2"/><rect x="1" y="5" width="2" height="2"/><rect x="1" y="9" width="2" height="2"/></g></svg>
<div class="a" style="left:632px;top:76px;width:392px;height:59px;background:#3e3e3e;"></div>
<svg class="a" style="left:639px;top:86px" width="21" height="23" viewBox="0 0 14 15"><g fill="none" stroke="#c8c8c8" stroke-width="0.8" stroke-linejoin="round"><path d="M7 1L13 4.3V10.9L7 14.2L1 10.9V4.3Z"/><path d="M1 4.3L7 7.6L13 4.3M7 7.6V14.2"/></g></svg>
<svg class="a" style="left:658px;top:107px" width="7" height="5" viewBox="0 0 7 5"><path d="M0 0H7L3.5 4Z" fill="#c4c4c4"/></svg>
<div class="a" style="left:678px;top:87px;width:14px;height:14px;background:#2a2a2a;border-radius:3px;border:1px solid #232323"></div>
<svg class="a" style="left:680px;top:89px" width="10" height="10" viewBox="0 0 10 10"><path d="M1.5 5L4 7.5L8.5 2" fill="none" stroke="#e0e0e0" stroke-width="1.5"/></svg>
<div class="a" style="left:698px;top:85px;width:249px;height:18px;background:#2a2a2a;border-radius:3px;border:1px solid #232323"></div>
<div class="t" style="left:701px;top:87px;color:#e0e0e0;-webkit-text-stroke:0.4px currentColor;letter-spacing:0.45px">Global Volume</div>
<div class="a" style="left:950px;top:87px;width:14px;height:14px;background:#2a2a2a;border-radius:2px;border:1px solid #232323"></div>
<div class="t" style="left:968px;top:87px;color:#d2d2d2;">Static</div>
<svg class="a" style="left:1013px;top:92px" width="8" height="6" viewBox="0 0 8 6"><path d="M0 0H8L4 5Z" fill="#c4c4c4"/></svg>
<div class="t" style="left:675px;top:111px;color:#b4b4b4;">Tag</div>
<div class="a" style="left:700px;top:110px;width:141px;height:16px;background:#515151;border-radius:3px;box-shadow:0 1px 0 #303030"></div>
<div class="t" style="left:704px;top:110px;color:#d2d2d2;">Untagged</div>
<svg class="a" style="left:828px;top:115px" width="8" height="6" viewBox="0 0 8 6"><path d="M0 0H8L4 5Z" fill="#c4c4c4"/></svg>
<div class="t" style="left:855px;top:111px;color:#b4b4b4;">Layer</div>
<div class="a" style="left:891px;top:110px;width:131px;height:16px;background:#515151;border-radius:3px;box-shadow:0 1px 0 #303030"></div>
<div class="t" style="left:894px;top:110px;color:#d2d2d2;">Default</div>
<svg class="a" style="left:1009px;top:115px" width="8" height="6" viewBox="0 0 8 6"><path d="M0 0H8L4 5Z" fill="#c4c4c4"/></svg>
<div class="a" style="left:632px;top:135px;width:392px;height:1px;background:#232323;"></div>
<div class="a" style="left:632px;top:136px;width:392px;height:20px;background:#3e3e3e;"></div>
<svg class="a" style="left:638px;top:143px" width="9" height="8" viewBox="0 0 9 8"><path d="M0 0H9L4.5 8Z" fill="#7a7a7a"/></svg>
<svg class="a" style="left:653px;top:139px" width="15" height="14" viewBox="0 0 15 14"><path d="M5.9 1H8.5L8.1 7.1H6.3Z" fill="#a6ee52"/><path d="M2 10.7L5.4 8.7" stroke="#82d6fc" stroke-width="2.5" stroke-linecap="round"/><path d="M9.1 8.8L12.8 10.7" stroke="#fb723c" stroke-width="2.5" stroke-linecap="round"/></svg>
<div class="t" style="left:692px;top:139px;color:#d2d2d2;-webkit-text-stroke:0.4px currentColor;letter-spacing:0.45px">Transform</div>
<svg class="a" style="left:968px;top:141px" width="12" height="11" viewBox="0 0 12 11"><circle cx="5.9" cy="5.15" r="5.1" fill="#c4c4c4"/><path d="M4 4.1Q4 2.3 5.9 2.3Q7.8 2.3 7.8 3.9Q7.8 4.9 6.8 5.4Q5.9 5.9 5.9 6.9" fill="none" stroke="#3e3e3e" stroke-width="1.5"/><rect x="5.1" y="7.7" width="1.6" height="1.5" fill="#3e3e3e"/></svg>
<svg class="a" style="left:988px;top:140px" width="12" height="12" viewBox="0 0 12 12"><g fill="#c4c4c4"><rect x="1" y="3" width="6" height="1.6"/><rect x="7" y="1" width="2" height="5"/><rect x="9" y="3" width="2" height="1.6"/><rect x="1" y="7.8" width="1.6" height="1.6"/><rect x="4" y="6.3" width="2" height="5"/><rect x="6" y="7.8" width="5" height="1.6"/></g></svg>
<svg class="a" style="left:1012px;top:140px" width="3" height="11" viewBox="0 0 3 11"><g fill="#c4c4c4"><rect x="1" y="1" width="2" height="2"/><rect x="1" y="5" width="2" height="2"/><rect x="1" y="9" width="2" height="2"/></g></svg>
<div class="a" style="left:632px;top:156px;width:392px;height:1px;background:#303030;"></div>
<div class="t" style="left:651px;top:163px;color:#d2d2d2;">Position</div>
<div class="t" style="left:791px;top:163px;color:#d2d2d2;">X</div>
<div class="a" style="left:805px;top:161px;width:60px;height:17px;background:#2a2a2a;border-radius:3px;border:1px solid #232323;border-top-color:#1a1a1a"></div>
<div class="t" style="left:808px;top:163px;color:#d2d2d2;">0</div>
<div class="t" style="left:870px;top:163px;color:#d2d2d2;">Y</div>
<div class="a" style="left:884px;top:161px;width:60px;height:17px;background:#2a2a2a;border-radius:3px;border:1px solid #232323;border-top-color:#1a1a1a"></div>
<div class="t" style="left:887px;top:163px;color:#d2d2d2;">0</div>
<div class="t" style="left:949px;top:163px;color:#d2d2d2;">Z</div>
<div class="a" style="left:963px;top:161px;width:60px;height:17px;background:#2a2a2a;border-radius:3px;border:1px solid #232323;border-top-color:#1a1a1a"></div>
<div class="t" style="left:966px;top:163px;color:#d2d2d2;">3</div>
<div class="t" style="left:651px;top:183px;color:#d2d2d2;">Rotation</div>
<div class="t" style="left:791px;top:183px;color:#d2d2d2;">X</div>
<div class="a" style="left:805px;top:181px;width:60px;height:17px;background:#2a2a2a;border-radius:3px;border:1px solid #232323;border-top-color:#1a1a1a"></div>
<div class="t" style="left:808px;top:183px;color:#d2d2d2;">0</div>
<div class="t" style="left:870px;top:183px;color:#d2d2d2;">Y</div>
<div class="a" style="left:884px;top:181px;width:60px;height:17px;background:#2a2a2a;border-radius:3px;border:1px solid #232323;border-top-color:#1a1a1a"></div>
<div class="t" style="left:887px;top:183px;color:#d2d2d2;">0</div>
<div class="t" style="left:949px;top:183px;color:#d2d2d2;">Z</div>
<div class="a" style="left:963px;top:181px;width:60px;height:17px;background:#2a2a2a;border-radius:3px;border:1px solid #232323;border-top-color:#1a1a1a"></div>
<div class="t" style="left:966px;top:183px;color:#d2d2d2;">0</div>
<div class="t" style="left:651px;top:203px;color:#d2d2d2;">Scale</div>
<div class="t" style="left:791px;top:203px;color:#d2d2d2;">X</div>
<div class="a" style="left:805px;top:201px;width:60px;height:17px;background:#2a2a2a;border-radius:3px;border:1px solid #232323;border-top-color:#1a1a1a"></div>
<div class="t" style="left:808px;top:203px;color:#d2d2d2;">1</div>
<div class="t" style="left:870px;top:203px;color:#d2d2d2;">Y</div>
<div class="a" style="left:884px;top:201px;width:60px;height:17px;background:#2a2a2a;border-radius:3px;border:1px solid #232323;border-top-color:#1a1a1a"></div>
<div class="t" style="left:887px;top:203px;color:#d2d2d2;">1</div>
<div class="t" style="left:949px;top:203px;color:#d2d2d2;">Z</div>
<div class="a" style="left:963px;top:201px;width:60px;height:17px;background:#2a2a2a;border-radius:3px;border:1px solid #232323;border-top-color:#1a1a1a"></div>
<div class="t" style="left:966px;top:203px;color:#d2d2d2;">1</div>
<svg class="a" style="left:768px;top:204px" width="14" height="12" viewBox="0 0 14 12"><g fill="none" stroke="#c4c4c4" stroke-width="1.1"><rect x="1.2" y="3" width="11" height="6" rx="3"/><path d="M4.5 6A2.2 2.2 0 0 1 8.8 6"/></g><path d="M2.5 1.5L11 10.5" stroke="#383838" stroke-width="2.4"/><path d="M2.5 1.5L11 10.5" stroke="#c4c4c4" stroke-width="1.1"/></svg>
<div class="a" style="left:632px;top:228px;width:392px;height:1px;background:#232323;"></div>
<div class="a" style="left:632px;top:229px;width:392px;height:20px;background:#3e3e3e;"></div>
<svg class="a" style="left:638px;top:236px" width="9" height="8" viewBox="0 0 9 8"><path d="M0 0H9L4.5 8Z" fill="#7a7a7a"/></svg>
<svg class="a" style="left:652px;top:230px" width="16" height="18" viewBox="0 0 16 18"><defs><linearGradient id="vg" x1="0" y1="0" x2="0" y2="1"><stop offset="0" stop-color="#a0a0a0"/><stop offset="0.55" stop-color="#7a7a7a"/><stop offset="1" stop-color="#3a3a3a"/></linearGradient></defs><path d="M7.8 2.6L13.3 5.6V12L7.8 15L2.4 12V5.6Z" fill="url(#vg)"/><path d="M2.6 6.6L7.8 9.6L13 6.6" fill="none" stroke="#f0f0f0" stroke-width="1.1"/><path d="M1.3 12.3V5.2M14.4 12.3V5.2M1.3 12.5L7.8 16.2L14.4 12.5" fill="none" stroke="#f4f4f4" stroke-width="1.2"/><path d="M1.8 4.8L7.8 1.4L13.9 4.8" fill="none" stroke="#f4f4f4" stroke-width="1.2" stroke-dasharray="1.3 1.1"/></svg>
<div class="a" style="left:672px;top:232px;width:14px;height:14px;background:#2a2a2a;border-radius:3px;border:1px solid #262626"></div>
<svg class="a" style="left:672px;top:232px" width="14" height="14" viewBox="0 0 14 14"><path d="M2.8 7.4L6.9 10.6L11 4.1" fill="none" stroke="#e0e0e0" stroke-width="1.4"/></svg>
<div class="t" style="left:692px;top:232px;color:#d2d2d2;-webkit-text-stroke:0.4px currentColor;letter-spacing:0.45px">Volume</div>
<svg class="a" style="left:968px;top:234px" width="12" height="11" viewBox="0 0 12 11"><circle cx="5.9" cy="5.15" r="5.1" fill="#c4c4c4"/><path d="M4 4.1Q4 2.3 5.9 2.3Q7.8 2.3 7.8 3.9Q7.8 4.9 6.8 5.4Q5.9 5.9 5.9 6.9" fill="none" stroke="#3e3e3e" stroke-width="1.5"/><rect x="5.1" y="7.7" width="1.6" height="1.5" fill="#3e3e3e"/></svg>
<svg class="a" style="left:988px;top:233px" width="12" height="12" viewBox="0 0 12 12"><g fill="#c4c4c4"><rect x="1" y="3" width="6" height="1.6"/><rect x="7" y="1" width="2" height="5"/><rect x="9" y="3" width="2" height="1.6"/><rect x="1" y="7.8" width="1.6" height="1.6"/><rect x="4" y="6.3" width="2" height="5"/><rect x="6" y="7.8" width="5" height="1.6"/></g></svg>
<svg class="a" style="left:1012px;top:233px" width="3" height="11" viewBox="0 0 3 11"><g fill="#c4c4c4"><rect x="1" y="1" width="2" height="2"/><rect x="1" y="5" width="2" height="2"/><rect x="1" y="9" width="2" height="2"/></g></svg>
<div class="a" style="left:632px;top:249px;width:392px;height:1px;background:#303030;"></div>
<div class="t" style="left:651px;top:256px;color:#d2d2d2;">Mode</div>
<div class="t" style="left:651px;top:276px;color:#d2d2d2;">Weight</div>
<div class="t" style="left:651px;top:296px;color:#d2d2d2;">Priority</div>
<div class="t" style="left:651px;top:316px;color:#d2d2d2;">Profile</div>
<div class="a" style="left:791px;top:255px;width:231px;height:16px;background:#515151;border-radius:3px;box-shadow:0 1px 0 #2c2c2c"></div>
<div class="t" style="left:794px;top:255px;color:#d2d2d2;">Global</div>
<svg class="a" style="left:1008px;top:261px" width="8" height="6" viewBox="0 0 8 6"><path d="M0 0H8L4 5Z" fill="#c4c4c4"/></svg>
<div class="a" style="left:790px;top:282px;width:173px;height:2px;background:#5e5e5e;border-radius:1px"></div>
<div class="a" style="left:958px;top:278px;width:10px;height:10px;border-radius:5px;background:#9a9a9a"></div>
<div class="a" style="left:973px;top:274px;width:49px;height:17px;background:#2a2a2a;border-radius:3px;border:1px solid #232323"></div>
<div class="t" style="left:977px;top:276px;color:#d2d2d2;">1</div>
<div class="a" style="left:790px;top:294px;width:232px;height:17px;background:#2a2a2a;border-radius:3px;border:1px solid #232323"></div>
<div class="t" style="left:794px;top:296px;color:#d2d2d2;">0</div>
<div class="a" style="left:790px;top:314px;width:143px;height:17px;background:#2a2a2a;border-radius:3px;border:1px solid #232323"></div>
<div class="a" style="left:913px;top:315px;width:19px;height:15px;background:#323232;border-radius:0 3px 3px 0"></div>
<svg class="a" style="left:917px;top:317px" width="11" height="11" viewBox="0 0 11 11"><circle cx="5.5" cy="5.5" r="4.5" fill="none" stroke="#c4c4c4" stroke-width="1.2"/><circle cx="5.5" cy="5.5" r="1.8" fill="#c4c4c4"/></svg>
<svg class="a" style="left:795px;top:319px" width="8" height="10" viewBox="0 0 12 14"><defs><linearGradient id="vpg" x1="0" y1="0" x2="0" y2="1"><stop offset="0" stop-color="#9a9a9a"/><stop offset="1" stop-color="#6a6a6a"/></linearGradient></defs><path d="M0 0.3H9L12 3.3V14H0Z" fill="url(#vpg)"/><g fill="none" stroke="#d8d8d8" stroke-width="1.1"><path d="M6 4L9.2 5.8V9.4L6 11.2L2.8 9.4V5.8Z"/><path d="M2.8 5.8L6 7.6L9.2 5.8M6 7.6V11.2"/></g></svg>
<div class="a" style="left:806px;top:316px;width:107px;height:15px;overflow:hidden"><div class="t" style="left:0;top:0;letter-spacing:-0.12px">SampleSceneProfile</div></div>
<div class="a" style="left:934px;top:315px;width:42px;height:16px;background:#585858;border-radius:3px 0 0 3px;box-shadow:0 1px 0 #282828"></div>
<div class="t" style="left:942px;top:316px;color:#d2d2d2;">New</div>
<div class="a" style="left:977px;top:315px;width:45px;height:16px;background:#585858;border-radius:0 3px 3px 0;box-shadow:0 1px 0 #282828"></div>
<div class="t" style="left:982px;top:316px;color:#d2d2d2;">Clone</div>
<div class="a" style="left:632px;top:340px;width:392px;height:1px;background:#232323;"></div>
<div class="a" style="left:632px;top:341px;width:392px;height:17px;background:#363636;"></div>
<div class="a" style="left:632px;top:358px;width:392px;height:1px;background:#232323;"></div>
<svg class="a" style="left:653px;top:344px" width="8" height="9" viewBox="0 0 8 9"><path d="M0 0L8 4.5L0 9Z" fill="#7a7a7a"/></svg>
<div class="a" style="left:667px;top:344px;width:12px;height:12px;background:#2a2a2a;border-radius:2px;border:1px solid #262626"></div>
<svg class="a" style="left:667px;top:344px" width="12" height="12" viewBox="0 0 12 12"><path d="M2.6 6.2L4.8 8.3L9.4 3.6" fill="none" stroke="#e0e0e0" stroke-width="1.3"/></svg>
<div class="t" style="left:683px;top:342px;color:#d2d2d2;-webkit-text-stroke:0.4px currentColor;letter-spacing:0.45px">Tonemapping</div>
<svg class="a" style="left:1012px;top:344px" width="3" height="11" viewBox="0 0 3 11"><g fill="#c4c4c4"><rect x="1" y="1" width="2" height="2"/><rect x="1" y="5" width="2" height="2"/><rect x="1" y="9" width="2" height="2"/></g></svg>
<div class="a" style="left:632px;top:359px;width:392px;height:17px;background:#363636;"></div>
<div class="a" style="left:632px;top:376px;width:392px;height:1px;background:#232323;"></div>
<svg class="a" style="left:653px;top:362px" width="8" height="9" viewBox="0 0 8 9"><path d="M0 0L8 4.5L0 9Z" fill="#7a7a7a"/></svg>
<div class="a" style="left:667px;top:362px;width:12px;height:12px;background:#2a2a2a;border-radius:2px;border:1px solid #262626"></div>
<svg class="a" style="left:667px;top:362px" width="12" height="12" viewBox="0 0 12 12"><path d="M2.6 6.2L4.8 8.3L9.4 3.6" fill="none" stroke="#e0e0e0" stroke-width="1.3"/></svg>
<div class="t" style="left:683px;top:360px;color:#d2d2d2;-webkit-text-stroke:0.4px currentColor;letter-spacing:0.45px">Bloom</div>
<svg class="a" style="left:1012px;top:362px" width="3" height="11" viewBox="0 0 3 11"><g fill="#c4c4c4"><rect x="1" y="1" width="2" height="2"/><rect x="1" y="5" width="2" height="2"/><rect x="1" y="9" width="2" height="2"/></g></svg>
<div class="a" style="left:632px;top:377px;width:392px;height:17px;background:#363636;"></div>
<div class="a" style="left:632px;top:394px;width:392px;height:1px;background:#232323;"></div>
<svg class="a" style="left:653px;top:380px" width="8" height="9" viewBox="0 0 8 9"><path d="M0 0L8 4.5L0 9Z" fill="#7a7a7a"/></svg>
<div class="a" style="left:667px;top:380px;width:12px;height:12px;background:#2a2a2a;border-radius:2px;border:1px solid #262626"></div>
<svg class="a" style="left:667px;top:380px" width="12" height="12" viewBox="0 0 12 12"><path d="M2.6 6.2L4.8 8.3L9.4 3.6" fill="none" stroke="#e0e0e0" stroke-width="1.3"/></svg>
<div class="t" style="left:683px;top:378px;color:#d2d2d2;-webkit-text-stroke:0.4px currentColor;letter-spacing:0.45px">Vignette</div>
<svg class="a" style="left:1012px;top:380px" width="3" height="11" viewBox="0 0 3 11"><g fill="#c4c4c4"><rect x="1" y="1" width="2" height="2"/><rect x="1" y="5" width="2" height="2"/><rect x="1" y="9" width="2" height="2"/></g></svg>
<div class="a" style="left:632px;top:395px;width:392px;height:41px;background:#363636;"></div>
<div class="a" style="left:651px;top:404px;width:371px;height:16px;background:#585858;border-radius:3px;box-shadow:0 1px 0 #282828"></div>
<div class="t" style="left:651px;top:404px;color:#d2d2d2;width:371px;text-align:center">Add Override</div>
<div class="a" style="left:632px;top:436px;width:392px;height:1px;background:#232323;"></div>
<div class="a" style="left:715px;top:446px;width:228px;height:22px;background:#585858;border-radius:3px;box-shadow:0 1px 0 #282828"></div>
<div class="t" style="left:715px;top:449px;color:#d2d2d2;width:228px;text-align:center">Add Component</div>
<svg class="a" style="left:0;top:0" width="1024" height="831"><path d="M179.3 191.9L193.8 202L191.4 204.9Q227.3 264.8 260.8 326Q221 268 184.2 208.2L181 210.2Z" fill="#f93434"/><path d="M708 309.5L763.5 315.5L764.5 311L780 320.6L761 326L762.5 323.3L708 310.8Z" fill="#f93434"/></svg>
</body></html>
